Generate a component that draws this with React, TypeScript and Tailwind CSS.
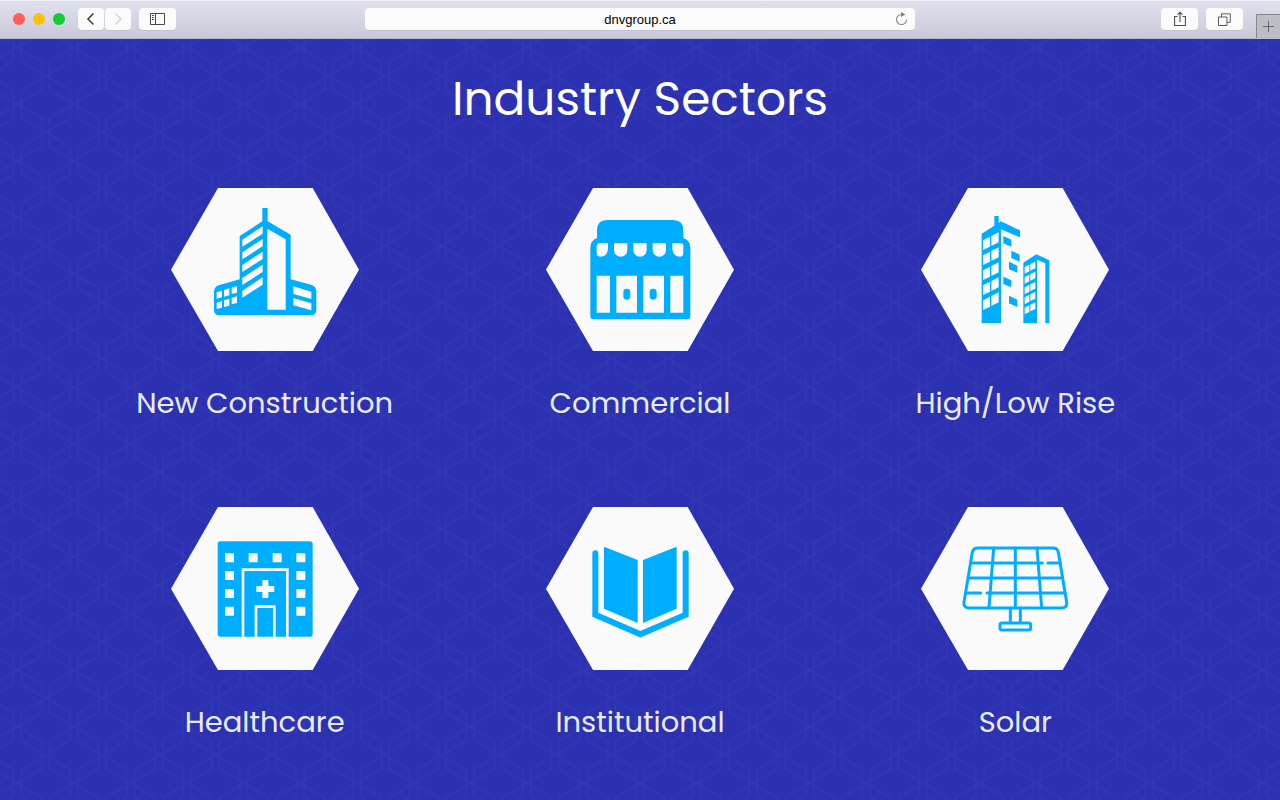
import type { ReactNode } from "react";

const WHITE = "#fafafa";

function NewConstructionIcon() {
  return (
    <>
      <path d="M306 83h16v40L391 163V297L452 313Q468 318 468 333V388Q468 405 450 405H178Q161 405 161 388V335Q161 320 175 315L238 297V167L306 123Z" />
      <g fill={WHITE}>
        {[0, 38, 76, 115, 153].map((y) => (
          <path key={y} d={`M246 ${178 + y}L307 ${138 + y}V${160 + y}L246 ${199 + y}Z`} />
        ))}
        <path d="M321 145L376 177V388H321Z" />
        <path d="M399 318L453 334V356L399 341ZM399 353L453 369V390L399 375Z" />
        {[0, 31].map((y) => (
          <path
            key={y}
            d={`M169 ${336 + y}l16 -5v20l-16 4ZM191 ${329 + y}l16 -5v21l-16 4ZM214 ${322 + y}l16 -5v20l-16 4Z`}
          />
        ))}
      </g>
    </>
  );
}

function CommercialIcon() {
  return (
    <>
      <path d="M185 173V150Q185 119 215 119H413Q444 119 444 150V173Q465 181 465 202V407Q465 417 455 417H175Q165 417 165 407V202Q165 181 185 173Z" />
      <g fill={WHITE}>
        <path d="M192 189H218V206Q215 229 196 229Q184 229 184 218V198Q184 189 192 189Z" />
        {[236, 294, 352].map((x) => (
          <path key={x} d={`M${x} 189h40v20a20 20 0 0 1 -40 0Z`} />
        ))}
        <path d="M437 189H411V206Q414 229 433 229Q444 229 444 218V198Q444 189 437 189Z" />
        <path d="M184 286h40v111h-40ZM243 286h62v111h-62ZM324 286h62v111h-62ZM405 286h39v111h-39Z" />
      </g>
      <rect x="264" y="325" width="21" height="33" rx="10" />
      <rect x="343" y="325" width="21" height="33" rx="10" />
    </>
  );
}

function RiseIcon() {
  return (
    <>
      <path d="M252 107h13v21L272 123L329 150V171L272 147V428H214V160L252 136Z" />
      <path d="M279 167l24 11v21l-24 -10ZM303 211l25 12v21l-25 -11ZM296 244l25 12v21l-25 -10ZM279 289l24 11v21l-24 -10ZM296 346l25 12v22l-25 -11Z" />
      <path d="M339 247L378 222L417 240V429H405V249L380 238V429H339Z" />
      <g fill={WHITE}>
        {[0, 45, 90, 135, 180].map((y) => (
          <path key={y} d={`M218 ${180 + y}l21 -11v30l-21 10ZM243 ${167 + y}l22 -11v30l-22 11Z`} />
        ))}
        {[0, 30, 61, 91, 122].map((y) => (
          <path key={y} d={`M343 ${260 + y}l14 -7v20l-14 7ZM360 ${251 + y}l15 -7v20l-15 7Z`} />
        ))}
      </g>
    </>
  );
}

function HealthcareIcon() {
  return (
    <>
      <rect x="172" y="126" width="285" height="286" rx="8" />
      <g fill={WHITE}>
        <path d="M194 162h27v27h-27ZM265 162h27v27h-27ZM337 162h27v27h-27ZM408 162h27v27h-27Z" />
        {[215, 269, 322].map((y) => (
          <path key={y} d={`M194 ${y}h27v27h-27ZM408 ${y}h27v27h-27Z`} />
        ))}
        <path d="M306 242h18v18h18v18h-18v18h-18v-18h-18v-18h18Z" />
      </g>
      <path d="M248 412V211H381V412M287 412V322H342V412" fill="none" stroke={WHITE} strokeWidth="8" />
    </>
  );
}

function InstitutionalIcon() {
  return (
    <>
      <path
        d="M180 162V346L315 405L451 346V162"
        fill="none"
        stroke="#00aeff"
        strokeWidth="18"
        strokeLinecap="round"
      />
      <path d="M206 142L307 182V371L206 328ZM424 142L323 182V371L424 328Z" />
    </>
  );
}

function SolarIcon() {
  return (
    <g fill="none" stroke="#00aeff" strokeWidth="9" strokeLinecap="round">
      <path d="M203 146H428Q441 146 444 159L469 309Q471 326 454 326H177Q159 326 161 309L186 159Q189 146 203 146Z" />
      <path d="M250 146L236 326M315 146V326M380 146L394 326M183 191H396M413 191H450M175 236H457M168 281H211M230 281H464" />
      <path d="M300 326V370M330 326V370" />
      <rect x="269" y="371" width="92" height="21" rx="6" />
    </g>
  );
}

const sectors: { name: string; icon: ReactNode }[] = [
  { name: "New Construction", icon: <NewConstructionIcon /> },
  { name: "Commercial", icon: <CommercialIcon /> },
  { name: "High/Low Rise", icon: <RiseIcon /> },
  { name: "Healthcare", icon: <HealthcareIcon /> },
  { name: "Institutional", icon: <InstitutionalIcon /> },
  { name: "Solar", icon: <SolarIcon /> },
];

function ToolbarButton({ label, className, children }: { label: string; className: string; children: ReactNode }) {
  return (
    <button
      type="button"
      aria-label={label}
      className={`flex h-[22px] items-center justify-center rounded bg-[#fbfbfb] shadow-[0_1px_0_#c3c3cf] ${className}`}
    >
      {children}
    </button>
  );
}

function BrowserBar() {
  return (
    <header className="flex h-[39px] items-center border-b border-b-[#b9b9c6] bg-linear-to-b from-[#e1e1ef] to-[#c9c9d9] shadow-[inset_0_1px_0_#efeff5]">
      <div className="flex flex-1 items-center">
        <div className="ml-[13px] flex gap-2">
          <span className="size-3 rounded-full bg-[#ff5f57]" />
          <span className="size-3 rounded-full bg-[#ffbf0a]" />
          <span className="size-3 rounded-full bg-[#14cb35]" />
        </div>
        <div className="ml-[13px] flex gap-px">
          <ToolbarButton label="Back" className="w-[26px]">
            <svg width="10" height="14" viewBox="0 0 10 14" fill="none" stroke="#444" strokeWidth="1.6">
              <path d="M7.5 1.5L2 7L7.5 12.5" />
            </svg>
          </ToolbarButton>
          <ToolbarButton label="Forward" className="w-[26px]">
            <svg width="10" height="14" viewBox="0 0 10 14" fill="none" stroke="#d0d0d0" strokeWidth="1.4">
              <path d="M2.5 1.5L8 7L2.5 12.5" />
            </svg>
          </ToolbarButton>
        </div>
        <ToolbarButton label="Show sidebar" className="ml-2 w-[37px]">
          <svg width="15" height="12" viewBox="0 0 15 12" fill="none" stroke="#4a4a4a">
            <path d="M.5 .5H14.5V11.5H.5ZM5.5 .5V11.5M2 2.5H4M2 4.5H4M2 6.5H4" />
          </svg>
        </ToolbarButton>
      </div>

      <div className="relative w-[43%]">
        <input
          type="text"
          aria-label="Address"
          defaultValue="dnvgroup.ca"
          className="block h-[22px] w-full rounded bg-[#fbfbfb] text-center text-[13px] text-black shadow-[0_1px_0_#c3c3cf] outline-none"
        />
        <button type="button" aria-label="Reload" className="absolute top-1 right-[7px]">
          <svg width="13" height="14" viewBox="0 0 13 14" className="block">
            <path d="M6.5 2.5A5 5 0 1 0 11.5 7.5" fill="none" stroke="#858585" strokeWidth="1.1" />
            <path d="M6 0L10.5 2.6L6 5Z" fill="#858585" />
          </svg>
        </button>
      </div>

      <div className="flex flex-1 items-center justify-end self-stretch">
        <ToolbarButton label="Share" className="w-[37px]">
          <svg width="12" height="16" viewBox="0 0 12 16" fill="none" stroke="#4f4f4f" strokeWidth="1.1">
            <path d="M3.5 5.5H.6V14.5H11.4V5.5H8.5M6 11V1.2M3.6 3.6L6 1.2L8.4 3.6" />
          </svg>
        </ToolbarButton>
        <ToolbarButton label="Show all tabs" className="ml-2 w-[37px]">
          <svg width="13" height="13" viewBox="0 0 13 13" fill="none" stroke="#5c5c5c">
            <path d="M.5 4H9V12.5H.5ZM3.5 4V.8H12.3V9.3H9" />
          </svg>
        </ToolbarButton>
        <button
          type="button"
          aria-label="New tab"
          className="ml-[13px] flex h-6 w-6 items-center justify-center self-end border-t border-l border-[#88888f] bg-[#bdbdc6]"
        >
          <svg width="11" height="11" viewBox="0 0 11 11" stroke="#66666c">
            <path d="M5.5 0V11M0 5.5H11" />
          </svg>
        </button>
      </div>
    </header>
  );
}

function HexPattern() {
  return (
    <svg className="absolute inset-0 size-full" aria-hidden="true">
      <defs>
        <pattern id="hexes" x="17.4" y="8.5" width="56.6" height="56.6" patternUnits="userSpaceOnUse">
          <path
            d="M0 0L24.4 14.3V42.3L0 56.6M56.6 0L32.2 14.3V42.3L56.6 56.6M3.9 0V14L28.3 28.3L52.7 14V0M3.9 56.6V42.6L28.3 28.3L52.7 42.6V56.6"
            fill="none"
            stroke="#ffffff"
            strokeOpacity="0.035"
            strokeWidth="1.3"
          />
        </pattern>
      </defs>
      <rect width="100%" height="100%" fill="url(#hexes)" />
    </svg>
  );
}

export default function App() {
  return (
    <div className="flex min-h-screen flex-col font-['Liberation_Sans',Arial,sans-serif]">
      <BrowserBar />
      <main className="relative grow bg-[#2b31b1] font-[Poppins,Inter,sans-serif]">
        <HexPattern />
        <section className="relative px-[77px] pt-8 pb-12">
          <h1 className="text-center text-[47px] leading-[56px] text-white">Industry Sectors</h1>
          <ul className="mt-[61px] grid grid-cols-3 gap-y-20">
            {sectors.map(({ name, icon }) => (
              <li key={name} className="flex flex-col items-center">
                <svg width="188" height="163" viewBox="32 23 564 489" fill="#00aeff" aria-hidden="true">
                  <path d="M32 268L173 23H457L596 268L457 512H173Z" fill={WHITE} />
                  {icon}
                </svg>
                <h2 className="mt-7 text-center text-[29px] leading-[48px] text-[#e9ebf8]">{name}</h2>
              </li>
            ))}
          </ul>
        </section>
      </main>
    </div>
  );
}
